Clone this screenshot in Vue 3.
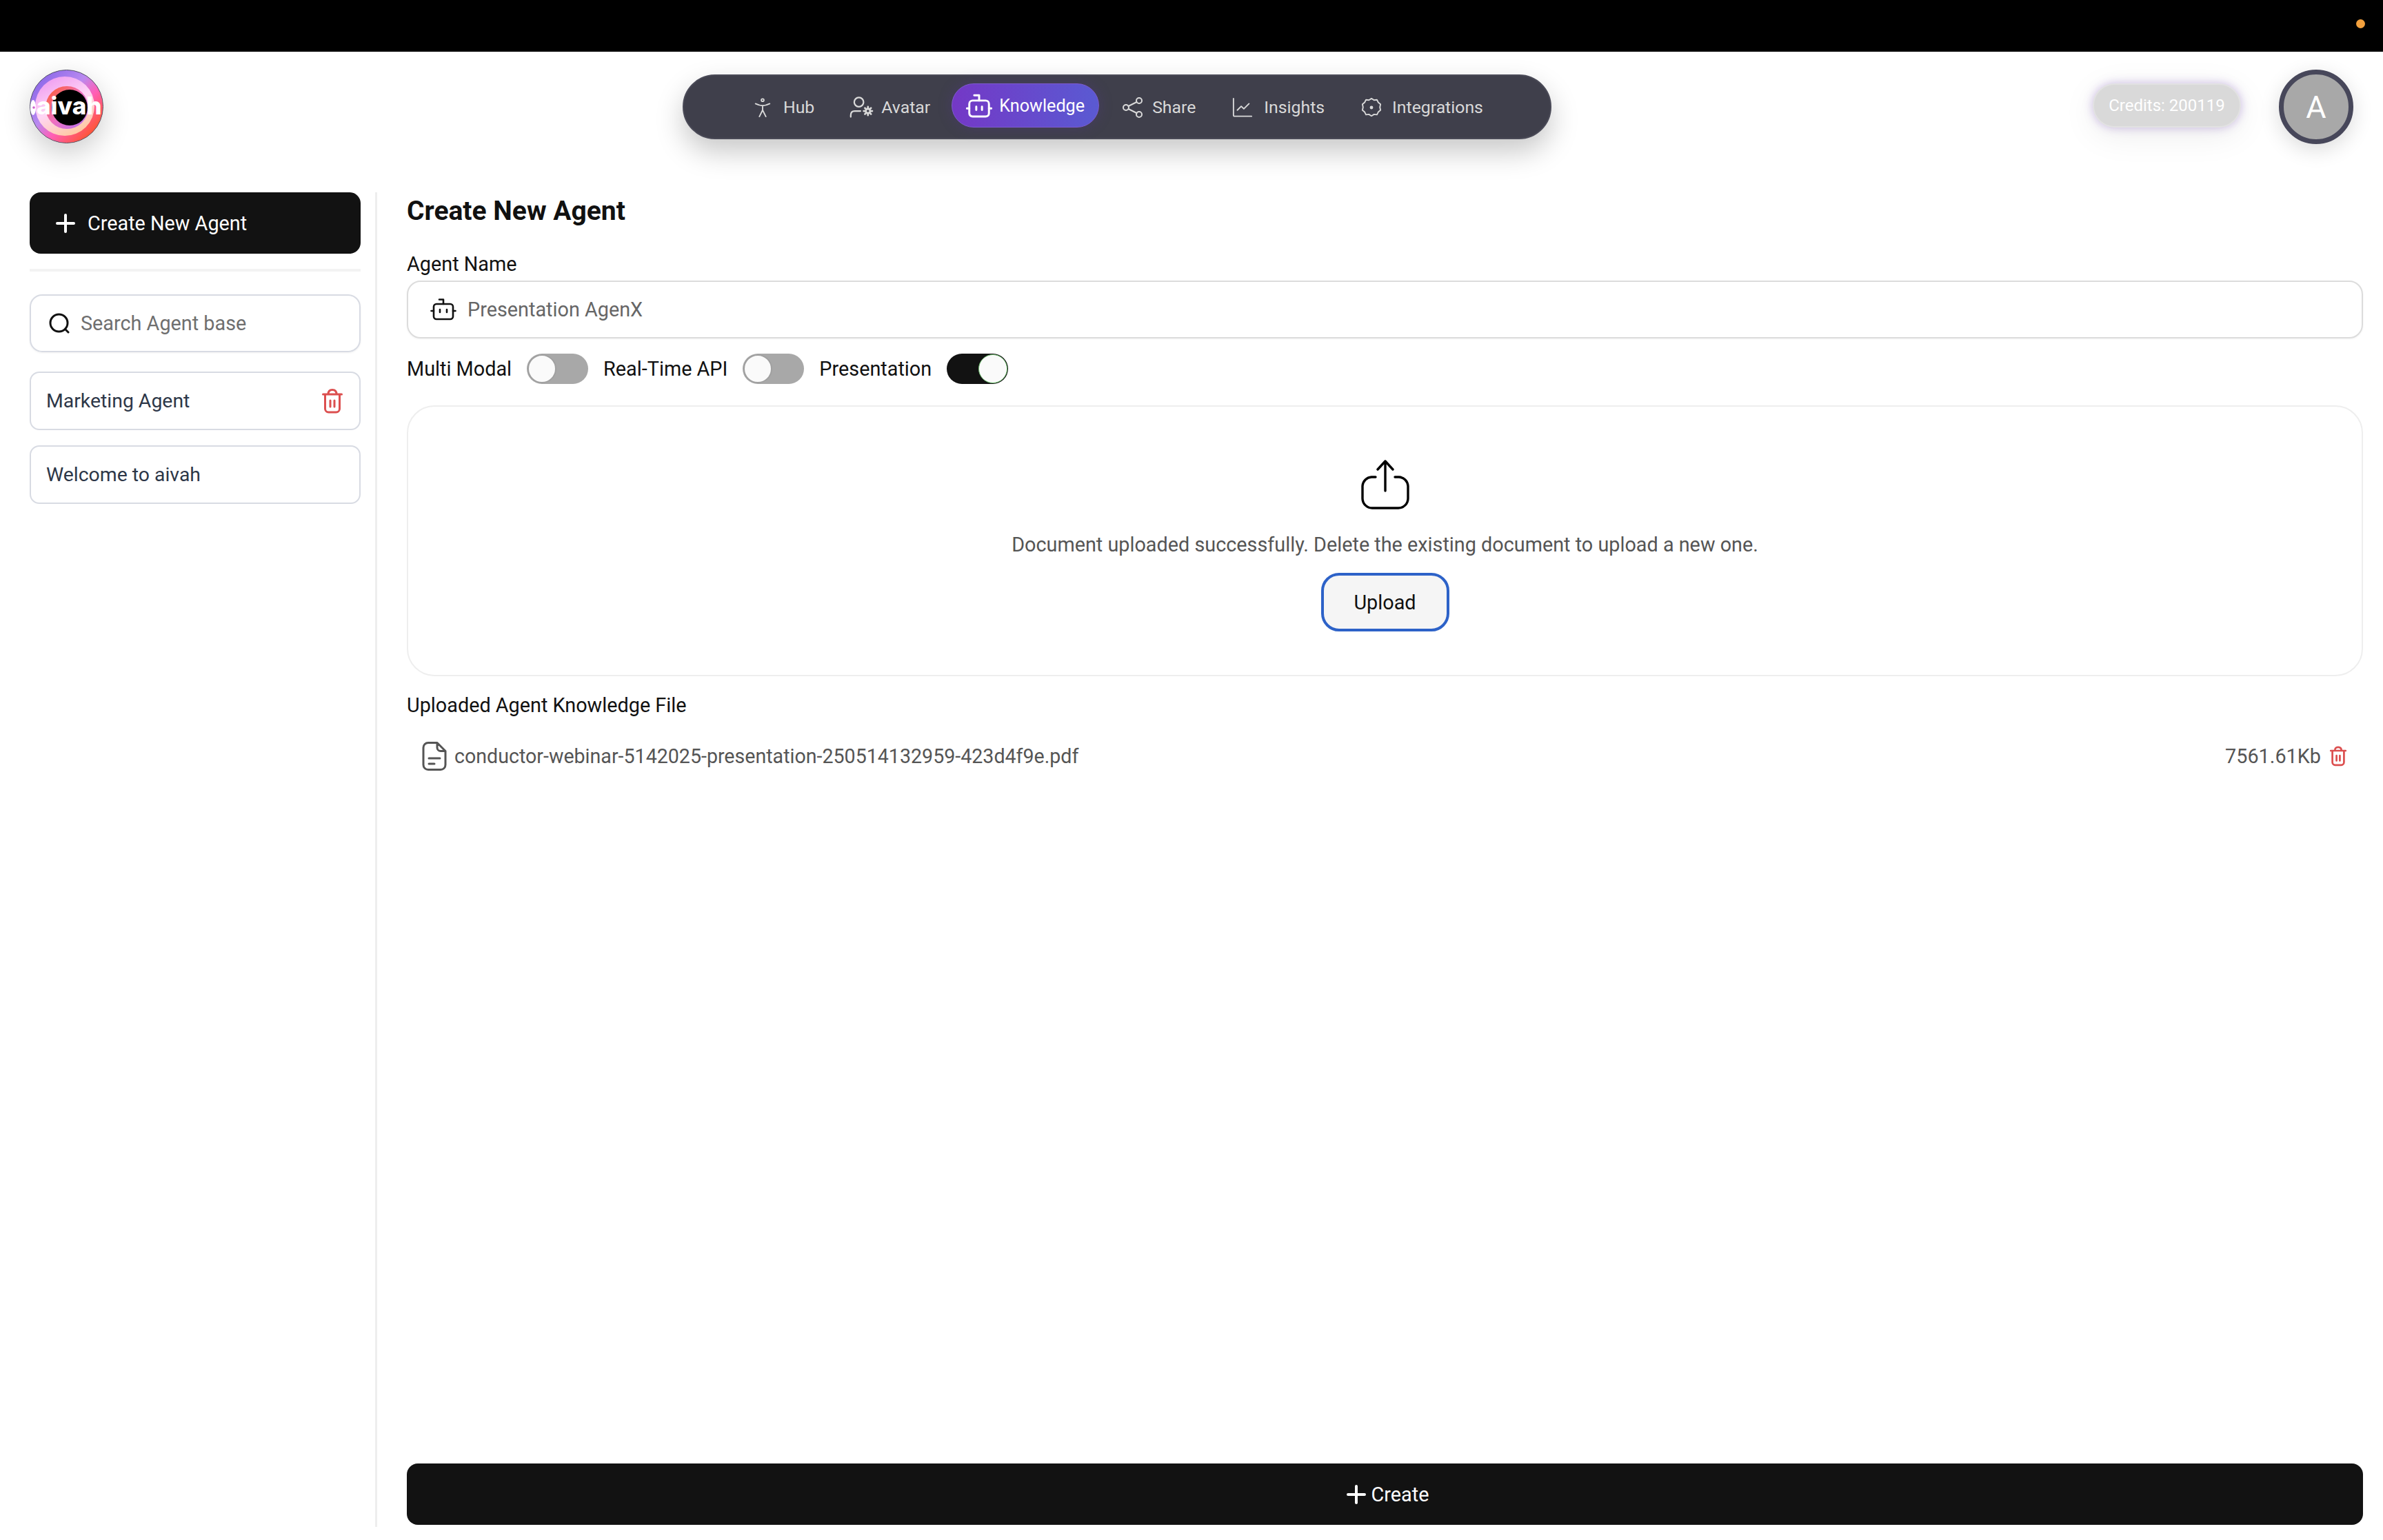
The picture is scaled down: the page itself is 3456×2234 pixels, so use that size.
<template>
  <div class="page">
    <div class="status-bar"><span class="status-dot"></span></div>

    <header class="topbar">
      <div class="logo">
        <svg viewBox="0 0 107 107" width="107" height="107">
          <defs>
            <linearGradient id="logoOuter" x1="0.1" y1="0.1" x2="0.9" y2="0.9">
              <stop offset="0" stop-color="#8a66e8" />
              <stop offset="0.4" stop-color="#b98af0" />
              <stop offset="0.62" stop-color="#ff5fb8" />
              <stop offset="1" stop-color="#ff5420" />
            </linearGradient>
            <linearGradient id="logoMid" x1="0.2" y1="0" x2="0.7" y2="1">
              <stop offset="0" stop-color="#ee9af0" />
              <stop offset="0.5" stop-color="#ffd6f6" />
              <stop offset="1" stop-color="#ffc89c" />
            </linearGradient>
            <linearGradient id="logoInner" x1="0" y1="0" x2="1" y2="1">
              <stop offset="0" stop-color="#ff5a24" />
              <stop offset="0.5" stop-color="#f070c0" />
              <stop offset="1" stop-color="#b070f4" />
            </linearGradient>
            <clipPath id="logoClip"><circle cx="53.500" cy="53.500" r="53" /></clipPath>
          </defs>
          <circle cx="53.500" cy="53.500" r="53" fill="url(#logoOuter)" stroke="#555566" stroke-width="1" />
          <circle cx="51" cy="53" r="43" fill="url(#logoMid)" />
          <circle cx="54" cy="55" r="31" fill="url(#logoInner)" />
          <circle cx="58" cy="55" r="26" fill="#000" />
          <g clip-path="url(#logoClip)">
            <ellipse cx="5" cy="55" rx="4" ry="11" fill="#fff" />
            <circle cx="6" cy="55" r="1.800" fill="#d060d0" />
          </g>
          <text x="10" y="65" class="logo-text">aivah</text>
        </svg>
      </div>

      <nav class="nav">
        <a v-for="item in navItems" :key="item.label" class="nav-item" :class="{ active: item.active }" :style="{ gap: item.gap + 'px', marginRight: item.after + 'px' }">
          <svg class="nav-icon" viewBox="0 0 32 32" :style="{ width: item.size + 'px', height: item.size + 'px' }" fill="none" stroke="currentColor" stroke-width="2" stroke-linecap="round" stroke-linejoin="round">
            <g v-if="item.icon === 'hub'">
              <circle cx="16" cy="4.500" r="2" />
              <path d="M5 10c4 2 7 3 11 3s7-1 11-3M16 13v7M16 20l-5 10M16 20l5 10" />
            </g>
            <g v-else-if="item.icon === 'avatar'">
              <circle cx="13" cy="9" r="6" />
              <path d="M2.500 28v-2c0-3.500 2-5.500 5-5.500h7.500" />
              <circle cx="24.700" cy="20.500" r="2.800" stroke-width="2.400" />
              <path d="M24.700 15v2M24.700 24v2M19.200 20.500h2M28.200 20.500h2M20.800 16.600l1.400 1.400M27.200 23l1.400 1.400M20.800 24.400l1.400-1.400M27.200 18l1.400-1.400" stroke-width="2.400" />
            </g>
            <g v-else-if="item.icon === 'robot'">
              <path d="M10 3.500h6V10" stroke-width="2.500" />
              <rect x="4" y="10" width="24" height="19.500" rx="4" stroke-width="2.500" />
              <path d="M1 19.500h3M28 19.500h3M12.500 17.500v4M19.500 17.500v4" stroke-width="2.500" />
            </g>
            <g v-else-if="item.icon === 'share'">
              <circle cx="6" cy="16" r="4" />
              <circle cx="25" cy="6" r="4" />
              <circle cx="25" cy="26" r="4" />
              <path d="M9.500 14 21.500 8M9.500 18l12 6" />
            </g>
            <g v-else-if="item.icon === 'insights'">
              <path d="M2 2v26a1.500 1.500 0 0 0 1.500 1.500H30" />
              <path d="M8 20l6-6 4 4 8-8" />
            </g>
            <g v-else>
              <path d="M16 2l4 2.500 4.500-.5 2 4 3.500 3-1 4.500 1 4.500-3.500 3-2 4-4.500-.5-4 2.500-4-2.500-4.500.5-2-4-3.500-3 1-4.500-1-4.500 3.500-3 2-4 4.500.5z" />
              <circle cx="16" cy="16" r="1.600" fill="currentColor" />
            </g>
          </svg>
          <span>{{ item.label }}</span>
        </a>
      </nav>

      <div class="account">
        <div class="credits">Credits: 200119</div>
        <div class="avatar">A</div>
      </div>
    </header>

    <div class="body">
      <aside class="sidebar">
        <button class="btn-new">
          <svg width="30" height="30" viewBox="0 0 30 30" stroke="#fff" stroke-width="4" stroke-linecap="round"><path d="M15 3v24M3 15h24" /></svg>
          <span>Create New Agent</span>
        </button>
        <div class="side-rule"></div>
        <div class="search">
          <svg width="32" height="30" viewBox="0 0 32 30" fill="none" stroke="#111" stroke-width="3" stroke-linecap="round"><circle cx="14.500" cy="14.500" r="12.500" /><path d="M24 24l4 4" /></svg>
          <span>Search Agent base</span>
        </div>
        <div v-for="agent in agents" :key="agent.name" class="agent">
          <span>{{ agent.name }}</span>
          <svg v-if="agent.removable" width="30" height="36" viewBox="0 0 30 36" fill="none" stroke="#dc4f4f" stroke-width="3" stroke-linecap="round" stroke-linejoin="round">
            <path d="M1.500 8h27M9 8c0-4 2-6.500 6-6.500S21 4 21 8M4.500 8v21a5 5 0 0 0 5 5h11a5 5 0 0 0 5-5V8M12 17v9M18 17v9" />
          </svg>
        </div>
      </aside>

      <main class="main">
        <h1>Create New Agent</h1>
        <label class="field-label">Agent Name</label>
        <div class="name-input">
          <svg width="38" height="32" viewBox="0 0 38 32" fill="none" stroke="#111" stroke-width="2.600" stroke-linecap="round" stroke-linejoin="round">
            <path d="M13 1.500h6V8" />
            <rect x="5" y="8" width="28" height="22" rx="4" />
            <path d="M1.500 18H5M33 18h3.500M14 16v4M24 16v4" />
          </svg>
          <span>Presentation AgenX</span>
        </div>

        <div class="toggles">
          <template v-for="t in toggles" :key="t.label">
            <span class="toggle-label">{{ t.label }}</span>
            <span class="toggle" :class="{ on: t.on }"><i></i></span>
          </template>
        </div>

        <section class="dropzone">
          <svg width="72" height="72" viewBox="0 0 72 72" fill="none" stroke="#000" stroke-width="3.400" stroke-linecap="round" stroke-linejoin="round">
            <path d="M36 45V2M25 14 36 2l11 12" />
            <path d="M22 25h-6A14 14 0 0 0 3 38v18a14 14 0 0 0 14 14h38a14 14 0 0 0 14-14V38a14 14 0 0 0-13-13h-6" />
          </svg>
          <p>Document uploaded successfully. Delete the existing document to upload a new one.</p>
          <button class="btn-upload">Upload</button>
        </section>

        <div class="file-title">Uploaded Agent Knowledge File</div>
        <div class="file-row">
          <svg width="36" height="42" viewBox="0 0 36 42" fill="none" stroke="#555" stroke-width="3" stroke-linecap="round" stroke-linejoin="round">
            <path d="M22 1.500H9a7 7 0 0 0-7 7v25a7 7 0 0 0 7 7h18a7 7 0 0 0 7-7V13.500zM22 1.500v7a5 5 0 0 0 5 5h7M10 24h16M10 32h8" />
          </svg>
          <span class="file-name">conductor-webinar-5142025-presentation-250514132959-423d4f9e.pdf</span>
          <span class="file-size">7561.61Kb</span>
          <svg width="24" height="30" viewBox="0 0 30 36" fill="none" stroke="#dc4f4f" stroke-width="3.400" stroke-linecap="round" stroke-linejoin="round">
            <path d="M1.500 8h27M9 8c0-4 2-6.500 6-6.500S21 4 21 8M4.500 8v21a5 5 0 0 0 5 5h11a5 5 0 0 0 5-5V8M12 17v9M18 17v9" />
          </svg>
        </div>

        <button class="btn-create">
          <svg width="28" height="28" viewBox="0 0 28 28" stroke="#fff" stroke-width="4" stroke-linecap="round"><path d="M14 2v24M2 14h24" /></svg>
          <span>Create</span>
        </button>
      </main>
    </div>
  </div>
</template>

<script setup>
const navItems = [
  { label: 'Hub', icon: 'hub', size: 30, gap: 15, after: 50 },
  { label: 'Avatar', icon: 'avatar', size: 36, gap: 11, after: 31 },
  { label: 'Knowledge', icon: 'robot', size: 38, gap: 10, after: 33, active: true },
  { label: 'Share', icon: 'share', size: 32, gap: 12, after: 53 },
  { label: 'Insights', icon: 'insights', size: 30, gap: 16, after: 53 },
  { label: 'Integrations', icon: 'integrations', size: 30, gap: 15, after: 0 }
]

const agents = [
  { name: 'Marketing Agent', removable: true },
  { name: 'Welcome to aivah', removable: false }
]

const toggles = [
  { label: 'Multi Modal', on: false },
  { label: 'Real-Time API', on: false },
  { label: 'Presentation', on: true }
]
</script>

<style>
html,
body {
  margin: 0;
  background: #fff;
}
</style>

<style scoped>
.page {
  width: 3456px;
  height: 2234px;
  display: flex;
  flex-direction: column;
  overflow: hidden;
  font-family: Roboto, "Liberation Sans", sans-serif;
  font-size: 28.8px;
  color: #111;
}
.status-bar {
  height: 75px;
  background: #000;
  position: relative;
  flex: none;
}
.status-dot {
  position: absolute;
  right: 26px;
  top: 28px;
  width: 13px;
  height: 13px;
  border-radius: 50%;
  background: #f2a03d;
}
.topbar {
  flex: none;
  height: 204px;
  box-sizing: border-box;
  padding: 26px 43px 0;
  display: grid;
  grid-template-columns: 947px 1260px 1fr;
  align-items: start;
}
.logo {
  width: 107px;
  height: 107px;
  border-radius: 50%;
  box-shadow: 0 14px 40px rgba(0, 0, 0, 0.2);
}
.logo svg {
  display: block;
}
.logo-text {
  font-family: Inter, sans-serif;
  font-weight: 800;
  font-size: 35px;
  fill: #fff;
}
.nav {
  margin-top: 7px;
  height: 94px;
  box-sizing: border-box;
  border: 2px solid #4a4a57;
  border-radius: 47px;
  background: #3f3f4b;
  box-shadow: 0 18px 40px rgba(0, 0, 0, 0.22);
  display: flex;
  align-items: center;
  padding-left: 99px;
  color: #d9d9d9;
  font-size: 24.8px;
}
.nav-item {
  display: flex;
  align-items: center;
  margin-top: 1px;
}
.nav-icon {
  flex: none;
}
.nav-item.active {
  color: #fff;
  font-size: 25.2px;
  height: 64px;
  margin-top: -4px;
  padding: 0 20px;
  border-radius: 32px;
  border: 1px solid #7d5ad0;
  box-sizing: border-box;
  background: linear-gradient(90deg, #7438c6, #5a5ad2);
  box-shadow: 0 0 20px rgba(90, 50, 170, 0.25);
}
.account {
  display: flex;
  align-items: flex-start;
  justify-content: flex-end;
  gap: 55px;
}
.credits {
  margin-top: 20px;
  height: 64px;
  width: 215px;
  box-sizing: border-box;
  border: 2px solid #e2e2e2;
  border-radius: 32px;
  background: #d9d9d9;
  color: #fff;
  font-size: 24px;
  display: flex;
  align-items: center;
  justify-content: center;
  box-shadow: 0 0 14px rgba(125, 85, 190, 0.38), 0 10px 50px rgba(0, 0, 0, 0.08);
}
.avatar {
  width: 108px;
  height: 108px;
  box-sizing: border-box;
  border: 7px solid #47475a;
  border-radius: 50%;
  background: #a8a8a8;
  color: #fff;
  font-size: 45px;
  display: flex;
  align-items: center;
  justify-content: center;
  box-shadow: 0 8px 30px rgba(0, 0, 0, 0.14);
}
.body {
  flex: 1;
  min-height: 0;
  display: flex;
  margin-bottom: 19px;
}
.sidebar {
  flex: none;
  width: 547px;
  box-sizing: border-box;
  padding: 0 21px 0 43px;
  border-right: 3px solid #eee;
}
.btn-new {
  width: 100%;
  height: 89px;
  border: 0;
  border-radius: 16px;
  background: #121212;
  color: #fff;
  font: inherit;
  display: flex;
  align-items: center;
  gap: 17px;
  padding: 0 0 0 37px;
}
.side-rule {
  height: 4px;
  margin: 22px 0 33px;
  background: #f3f3f3;
}
.search {
  height: 84px;
  box-sizing: border-box;
  border: 2px solid #d8dbe3;
  border-radius: 18px;
  display: flex;
  align-items: center;
  gap: 14px;
  padding-left: 26px;
  color: #6f6f6f;
  box-shadow: 0 1px 3px rgba(0, 0, 0, 0.06);
}
.agent {
  height: 85px;
  box-sizing: border-box;
  border: 2px solid #d8dbe3;
  border-radius: 14px;
  margin-top: 22px;
  display: flex;
  align-items: center;
  justify-content: space-between;
  padding: 0 24px 0 22px;
  color: #2d3748;
  font-size: 28.4px;
}
.search + .agent {
  margin-top: 28px;
}
.main {
  flex: 1;
  min-width: 0;
  box-sizing: border-box;
  padding: 0 29px 3px 43px;
  display: flex;
  flex-direction: column;
}
h1 {
  margin: 0;
  font-size: 39px;
  line-height: 54px;
  font-weight: 700;
}
.field-label {
  margin-top: 34px;
  line-height: 32px;
}
.name-input {
  margin-top: 8px;
  height: 84px;
  flex: none;
  box-sizing: border-box;
  border: 2px solid #dcdcdc;
  border-radius: 20px;
  display: flex;
  align-items: center;
  gap: 16px;
  padding-left: 32px;
  color: #666;
  box-shadow: 0 1px 3px rgba(0, 0, 0, 0.05);
}
.toggles {
  margin-top: 22px;
  display: flex;
  align-items: center;
  gap: 22px;
}
.toggle {
  width: 89px;
  height: 44px;
  box-sizing: border-box;
  border-radius: 22px;
  background: #a8a8a8;
  padding: 1px;
  display: flex;
}
.toggle i {
  width: 42px;
  height: 42px;
  box-sizing: border-box;
  border-radius: 50%;
  background: #fafafa;
  border: 2px solid #a0a0a0;
}
.toggle.on {
  background: #121212;
  justify-content: flex-end;
}
.toggle.on i {
  border: 1px solid #6fc06f;
}
.dropzone {
  margin-top: 31px;
  flex: none;
  height: 393px;
  box-sizing: border-box;
  border: 2px solid #eee;
  border-radius: 40px;
  padding-top: 77px;
  display: flex;
  flex-direction: column;
  align-items: center;
}
.dropzone svg {
  display: block;
}
.dropzone p {
  margin: 33px 0 0;
  line-height: 36px;
  color: #555;
}
.btn-upload {
  margin-top: 23px;
  width: 186px;
  height: 85px;
  box-sizing: border-box;
  border: 4px solid #2d62c8;
  border-radius: 26px;
  background: #f5f5f5;
  color: #111;
  font: inherit;
}
.file-title {
  margin-top: 26px;
  line-height: 32px;
}
.file-row {
  margin-top: 28px;
  height: 60px;
  flex: none;
  display: flex;
  align-items: center;
  padding: 0 24px 0 22px;
  color: #555;
}
.file-name {
  margin-left: 11px;
  font-size: 28.6px;
}
.file-size {
  margin-left: auto;
  margin-right: 13px;
}
.btn-create {
  margin-top: auto;
  height: 89px;
  flex: none;
  border: 0;
  border-radius: 16px;
  background: #121212;
  color: #fff;
  font: inherit;
  display: flex;
  align-items: center;
  justify-content: center;
  gap: 8px;
  padding: 0 0 0 8px;
}
</style>
